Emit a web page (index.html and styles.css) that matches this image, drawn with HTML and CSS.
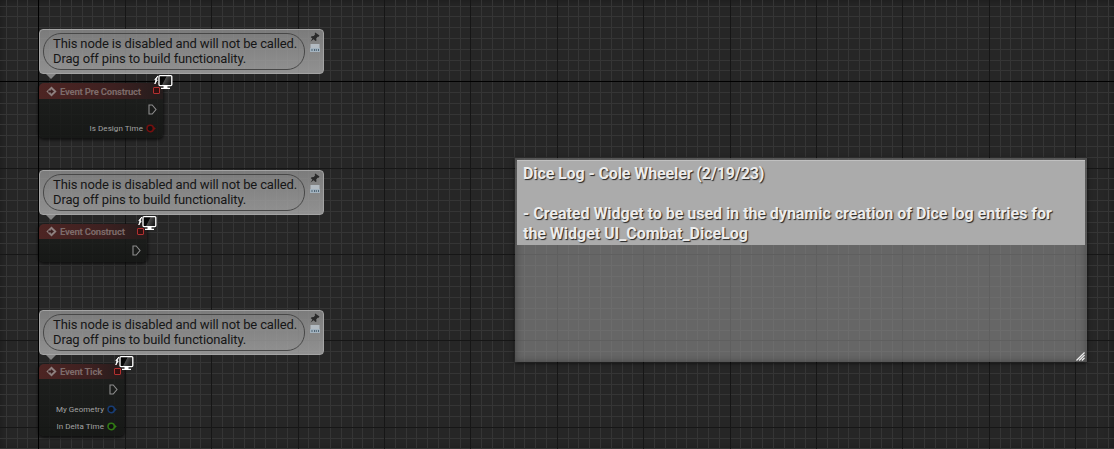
FILE: index.html
```html
<!DOCTYPE html>
<html lang="en">
<head>
<meta charset="utf-8">
<title>Event Graph</title>
<link rel="stylesheet" href="styles.css">
</head>
<body>
<svg class="defs" width="0" height="0" aria-hidden="true">
  <defs>
    <linearGradient id="screen" x1="0" y1="0" x2="1" y2="0.4"><stop offset="0" stop-color="#000"/><stop offset=".5" stop-color="#080808"/><stop offset=".56" stop-color="#4a4a4a"/><stop offset="1" stop-color="#1c1c1c"/></linearGradient>
    <symbol id="event" viewBox="0 0 11 11"><path d="M5.5.6 10.6 5.5 5.5 10.4.4 5.5z" fill="#8d7f7e"/><path d="M2.3 4.6h2.6V2.9L8 5.5 4.9 8.1V6.4H2.3z" fill="#3a1d1d"/></symbol>
    <symbol id="exec" viewBox="0 0 9 11"><path d="M1 1h3.2L8 5.5 4.2 10H1z" fill="none" stroke="#8d8d8d" stroke-width="1.1"/></symbol>
    <symbol id="pin" viewBox="0 0 10 9"><circle cx="4.2" cy="4.5" r="3.2" fill="#111" stroke="currentColor" stroke-width="1.5"/><path d="M7.4 2.5 9.8 4.5 7.4 6.5z" fill="currentColor"/></symbol>
    <symbol id="client" viewBox="0 0 20 17"><path d="M4.8 2 1.8 5.5 3 6 1.8 10 4.2 6 3.2 5.5z" fill="#fff" stroke="#fff" stroke-width=".9"/><rect x="6" y="1.6" width="12.8" height="10" rx="1" fill="url(#screen)" stroke="#fff" stroke-width="1.3"/><path d="M10.5 12h4v1.7h2.5v1.4H8v-1.4h2.5z" fill="#fff"/></symbol>
    <symbol id="tack" viewBox="0 0 10 10"><path d="M5.2.4 9.5 3.5 8.6 4.8 7.6 4.7 6.2 6.5 6.5 8.4 5.5 9 3.6 7.3.6 9.5 2.4 6.5.8 5.2 1.5 4.3 3.8 4.1 5.2 2.3 4.7 1.2z" fill="#2a2a2a"/></symbol>
    <symbol id="bubble" viewBox="0 0 10 9"><path d="M.5 0h9v8h-9z" fill="#b3bbc2"/><path d="M0 4h10v4H0z" fill="#a3b2be"/><path d="M1.5 5h1v2h-1zM4 5h1v2H4zM5.8 5h1v2h-1zM8 5h1v2H8z" fill="#4e6474"/></symbol>
  </defs>
</svg>
<main class="graph">
  <svg class="grid" id="grid" width="1114" height="449"></svg>

  <section class="event event-pre">
    <div class="note"><p class="note-text">This node is disabled and will not be called.<br>Drag off pins to build functionality.</p><div class="tools"><svg class="tack"><use href="#tack"/></svg><svg class="bubble"><use href="#bubble"/></svg></div></div>
    <div class="node">
      <header class="title"><svg class="glyph"><use href="#event"/></svg><span>Event Pre Construct</span></header>
      <div class="row exec-row"><svg class="exec"><use href="#exec"/></svg></div>
      <div class="row"><span>Is Design Time</span><svg class="pin red"><use href="#pin"/></svg></div>
      <i class="delegate"></i><svg class="client"><use href="#client"/></svg>
    </div>
  </section>

  <section class="event event-construct">
    <div class="note"><p class="note-text">This node is disabled and will not be called.<br>Drag off pins to build functionality.</p><div class="tools"><svg class="tack"><use href="#tack"/></svg><svg class="bubble"><use href="#bubble"/></svg></div></div>
    <div class="node">
      <header class="title"><svg class="glyph"><use href="#event"/></svg><span>Event Construct</span></header>
      <div class="row exec-row"><svg class="exec"><use href="#exec"/></svg></div>
      <i class="delegate"></i><svg class="client"><use href="#client"/></svg>
    </div>
  </section>

  <section class="event event-tick">
    <div class="note"><p class="note-text">This node is disabled and will not be called.<br>Drag off pins to build functionality.</p><div class="tools"><svg class="tack"><use href="#tack"/></svg><svg class="bubble"><use href="#bubble"/></svg></div></div>
    <div class="node">
      <header class="title"><svg class="glyph"><use href="#event"/></svg><span>Event Tick</span></header>
      <div class="row exec-row"><svg class="exec"><use href="#exec"/></svg></div>
      <div class="row"><span>My Geometry</span><svg class="pin blue"><use href="#pin"/></svg></div>
      <div class="row"><span>In Delta Time</span><svg class="pin green"><use href="#pin"/></svg></div>
      <i class="delegate"></i><svg class="client"><use href="#client"/></svg>
    </div>
  </section>

  <section class="comment">
    <div class="comment-title"><span class="heading">Dice Log - Cole Wheeler (2/19/23)</span><br><br>- Created Widget to be used in the dynamic creation of Dice log entries for<br>the Widget UI_Combat_DiceLog</div>
    <svg class="resize" viewBox="0 0 10 10"><path d="M.5 9.5 9.5.5M3.5 9.5 9.5 3.5M6.5 9.5 9.5 6.5" stroke="#eee" stroke-width="1.4"/></svg>
  </section>
</main>
<script src="grid.js"></script>
</body>
</html>
```

FILE: styles.css
```css
* { box-sizing: border-box; }
body { margin: 0; background: #262626; }
.defs { position: absolute; }
.graph { position: relative; width: 1114px; height: 449px; overflow: hidden; box-shadow: inset 0 0 8px rgba(0,0,0,.35); font-family: Roboto, sans-serif; }
.grid { position: absolute; left: 0; top: 0; }
.minor { fill: #353535; }
.major { fill: #161616; }
.axis { fill: #000; }

.event { position: absolute; left: 39px; width: 285px; }
.event-pre { top: 29px; --w: 124px; --h: 55px; }
.event-construct { top: 170px; --w: 108px; --h: 38px; }
.event-tick { top: 310px; --w: 85px; --h: 72px; }
.note { position: relative; display: flex; height: 45px; padding: 4px 3px 4px 4px; border: 1px solid #a4a4a4; border-radius: 4px; background: linear-gradient(rgba(145,145,145,.8), rgba(168,168,168,.82)); }
.note::after { content: ""; position: absolute; left: 6px; top: 44px; border: 5px solid transparent; border-top: 5px solid #858585; border-bottom: 0; }
.note-text { width: 264px; height: 37px; margin: -1px 0 0 -1px; padding: 2px 0 0 9px; border: 1px solid #484848; border-radius: 18px; color: #161616; font-size: 13px; line-height: 15px; white-space: nowrap; letter-spacing: -.13px; }
.tools { display: flex; flex-direction: column; gap: 2px; padding: 0 0 0 5px; margin-top: -2px; }
.tack { width: 10px; height: 10px; }
.bubble { width: 10px; height: 9px; }
.node { position: relative; width: var(--w); height: var(--h); margin-top: 9px; border-radius: 5px; background: linear-gradient(rgba(27,29,27,.75), rgba(20,22,20,.85)); box-shadow: 0 1px 3px 1px rgba(0,0,0,.6); }
.title { display: flex; align-items: center; gap: 3px; height: 15px; padding: 0 0 0 7px; border-radius: 5px 5px 0 0; background: linear-gradient(90deg, #4d2523, #3d2020 60%, #241c1c); color: #7d6b6a; font-size: 9.5px; font-weight: 700; white-space: nowrap; letter-spacing: -.22px; }
.event-pre .title { height: 16px; }
.glyph { width: 11px; height: 11px; }
.row { display: flex; justify-content: flex-end; align-items: center; gap: 3px; height: 17.3px; padding-right: 7px; color: #a3a3a3; font-size: 8px; letter-spacing: .06px; }
.exec-row { height: 21px; padding-right: 6px; }
.event-construct .exec-row { height: 22px; }
.event-tick .exec-row { height: 21.4px; }
.exec { width: 9px; height: 11px; }
.pin { width: 10px; height: 9px; }
.red { color: #74100f; }
.blue { color: #183d75; }
.green { color: #317b14; }
.delegate { position: absolute; right: 3px; top: 4px; width: 7px; height: 7px; border: 1px solid #b33030; border-radius: 1px; background: #311; }
.client { position: absolute; right: -10px; top: -9px; width: 20px; height: 17px; }

.comment { position: absolute; left: 515px; top: 158px; width: 572px; height: 204px; padding: 2px; background: rgba(145,145,145,.6); box-shadow: 0 1px 4px rgba(0,0,0,.7), inset 0 0 7px rgba(30,30,30,.5); }
.comment-title { height: 85px; padding: 3px 6px; background: #ababab; border-top: 1px solid #c0c0c0; color: #ececec; font-size: 16px; line-height: 20px; font-weight: 700; white-space: nowrap; letter-spacing: -.03px; text-shadow: 1px 1px 1px #222; }
.heading { letter-spacing: -.11px; }
.resize { position: absolute; right: 2px; bottom: 1px; width: 9px; height: 9px; }
```

FILE: grid.js
```js
const grid = document.getElementById("grid");
const step = 10.8;
const originX = 38.3;
const originY = 81.2;
const layers = { minor: [], major: [], axis: [] };

function kind(i) {
  if (i === 0) return "axis";
  return i % 8 === 0 ? "major" : "minor";
}

for (let i = -10; i < 105; i++) {
  const x = Math.round(originX + i * step);
  const y = Math.round(originY + i * step);
  layers[kind(i)].push([x, 0, 1, 449], [0, y, 1114, 1]);
}

for (const name of Object.keys(layers)) {
  for (const [x, y, width, height] of layers[name]) {
    const r = document.createElementNS("http://www.w3.org/2000/svg", "rect");
    r.setAttribute("class", name);
    r.setAttribute("x", x);
    r.setAttribute("y", y);
    r.setAttribute("width", width);
    r.setAttribute("height", height);
    grid.appendChild(r);
  }
}
```
